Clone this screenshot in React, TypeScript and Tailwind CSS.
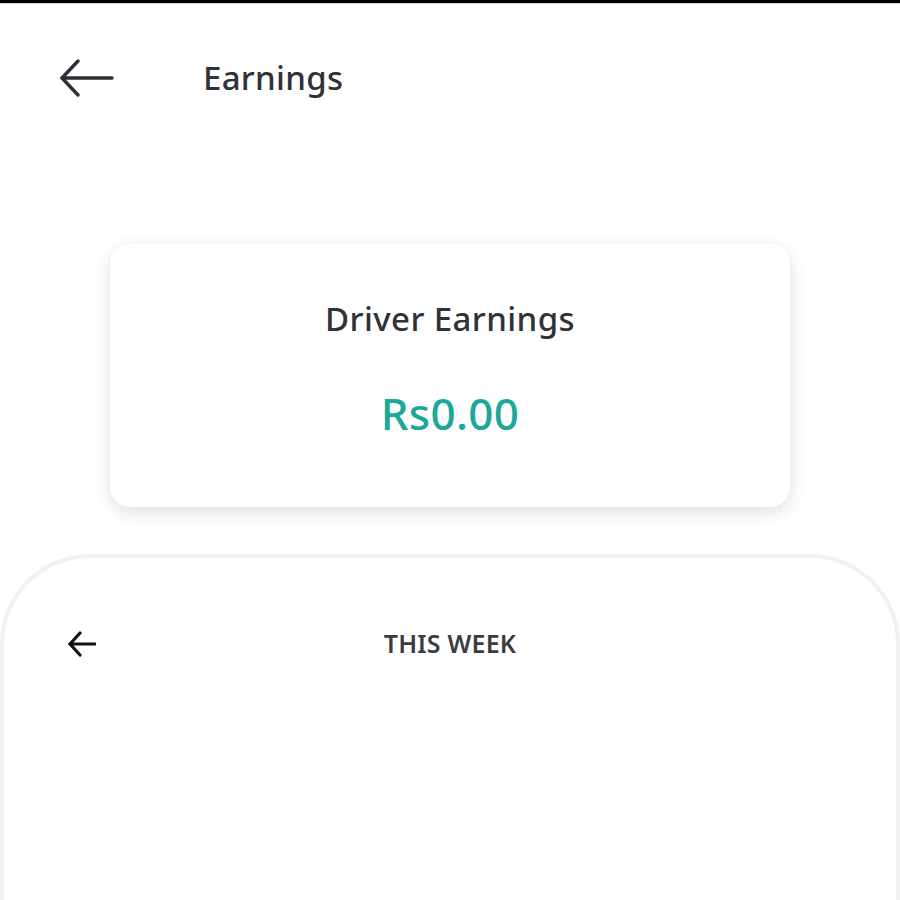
import React from 'react';

const BackArrow: React.FC<{ className?: string }> = ({ className }) => (
  <svg viewBox="0 0 54 38" className={className} fill="none" stroke="currentColor" strokeWidth={3.4} strokeLinecap="round" strokeLinejoin="round">
    <path d="M52 19H2" />
    <path d="M18 2L2 19l16 17" />
  </svg>
);

const SmallArrow: React.FC<{ className?: string }> = ({ className }) => (
  <svg viewBox="0 0 28 26" className={className} fill="none" stroke="currentColor" strokeWidth={3.2} strokeLinecap="round" strokeLinejoin="round">
    <path d="M27 13H2" />
    <path d="M12 2L2 13l10 11" />
  </svg>
);

const App: React.FC = () => {
  const earnings = 0;

  return (
    <div className="h-[900px] flex flex-col bg-white font-['Noto_Sans','Open_Sans',sans-serif] text-[#2f3237] overflow-hidden">
      {/* status bar edge */}
      <div className="h-[3px] bg-black shrink-0" />
      <div className="h-px bg-[#d9d9d9] shrink-0" />

      {/* Header */}
      <div className="flex items-center h-[152px] shrink-0 pl-[60px] pb-[4px]">
        <BackArrow className="w-[54px] h-[38px] text-[#2d3036]" />
        <h1 className="ml-[89px] text-[33px] font-medium tracking-[0.3px]">Earnings</h1>
      </div>

      {/* Summary card */}
      <div className="mt-[88px] mx-[110px] h-[263px] shrink-0 rounded-[20px] bg-white shadow-[0_5px_18px_rgba(0,0,0,0.13)] flex flex-col items-center pt-[50px]">
        <p className="text-[33px] font-medium tracking-[0.4px]">Driver Earnings</p>
        <p className="mt-[36px] text-[44px] font-medium tracking-[0.3px] text-[#1ba898]">Rs{earnings.toFixed(2)}</p>
      </div>

      {/* Weekly sheet */}
      <div className="mt-[47px] flex-1 rounded-t-[90px] border-[4px] border-b-0 border-[#f1f1f1] bg-white">
        <div className="relative flex items-center justify-center h-[155px] border-b border-[#fafafa] mx-[12px]">
          <SmallArrow className="absolute left-[52px] top-[73px] w-[28px] h-[26px] text-[#111]" />
          <span className="mt-[18px] text-[25px] font-semibold tracking-[0.2px] text-[#3a3d42]">THIS WEEK</span>
        </div>
      </div>
    </div>
  );
};

export default App;
